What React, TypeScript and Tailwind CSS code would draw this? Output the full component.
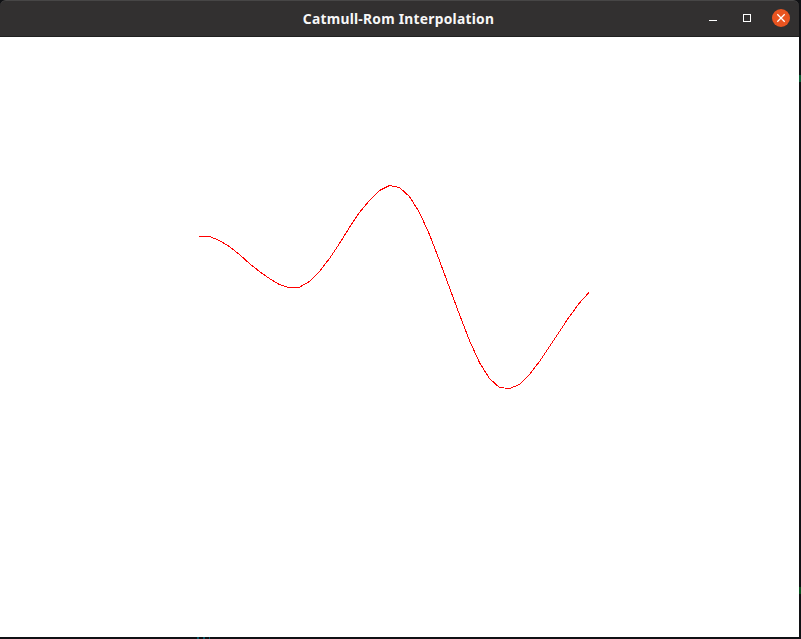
const points: [number, number][] = [
  [198.5, 236], [209, 236], [219, 240], [229, 246], [239, 254], [249, 263], [259, 271],
  [269, 278], [279, 284], [288, 287], [298.5, 287], [309, 281], [319, 271], [329, 258],
  [339, 243], [349, 227], [359, 212], [369, 200], [379, 190], [389, 185], [399, 187],
  [409, 196], [419, 212], [429, 234], [439, 260], [449, 287], [459, 314], [469, 340],
  [479, 362], [489, 378], [499, 387], [509, 388], [519, 384], [529, 374], [539, 361],
  [549, 346], [559, 331], [569, 316], [579, 302.5], [588.5, 292],
];

const TITLE_BAR = 37;

function TitleBar() {
  return (
    <header className="flex h-[37px] w-[799px] shrink-0 items-center rounded-t-md border-t border-b border-t-[#474646] border-b-[#202020] bg-[#323030]">
      <div className="w-[101px]" />
      <h1 className="flex-1 pr-0.5 text-center font-['Noto_Sans',sans-serif] text-[13.8px] leading-[18px] font-bold tracking-[0.25px] whitespace-nowrap text-[#f7f7f7]">
        Catmull-Rom Interpolation
      </h1>
      <div className="flex w-[101px] items-center pb-0.5">
        <button aria-label="Minimize" className="ml-[11px] flex h-[18px] w-2 items-center">
          <span className="mt-[5px] h-px w-2 bg-white" />
        </button>
        <button aria-label="Maximize" className="ml-[26px] size-2 border border-white" />
        <button aria-label="Close" className="ml-[21px] size-[18px] rounded-full bg-[#e95420]">
          <svg viewBox="0 0 18 18" className="size-[18px]" fill="none" stroke="white" strokeWidth="1.3">
            <path d="M5.3 5.3 12.7 12.7M12.7 5.3 5.3 12.7" />
          </svg>
        </button>
      </div>
    </header>
  );
}

function Curve() {
  return (
    <svg className="block h-[600px] w-[799px]" viewBox="0 0 799 600" fill="none" shapeRendering="crispEdges">
      <polyline
        points={points.map(([x, y]) => `${x + 0.45},${y - TITLE_BAR + 0.5}`).join(" ")}
        stroke="#ff0000"
        strokeWidth="1"
      />
    </svg>
  );
}

export default function App() {
  return (
    <div className="flex h-[639px] w-[801px] overflow-hidden bg-[#101114]">
      <div className="flex w-[799px] flex-col">
        <TitleBar />
        <main className="h-[600px] bg-white">
          <Curve />
        </main>
        <div className="flex h-0.5 gap-1 pl-[197px]">
          <span className="w-0.5 bg-[#075564]" />
          <span className="w-0.5 bg-[#075564]" />
          <span className="w-px bg-[#075564]" />
        </div>
      </div>
      <div className="flex w-0.5 flex-col">
        <span className="mt-[75px] h-[7px] bg-[#075b32]" />
        <span className="mt-[505px] h-[7px] bg-[#07501d]" />
      </div>
    </div>
  );
}
